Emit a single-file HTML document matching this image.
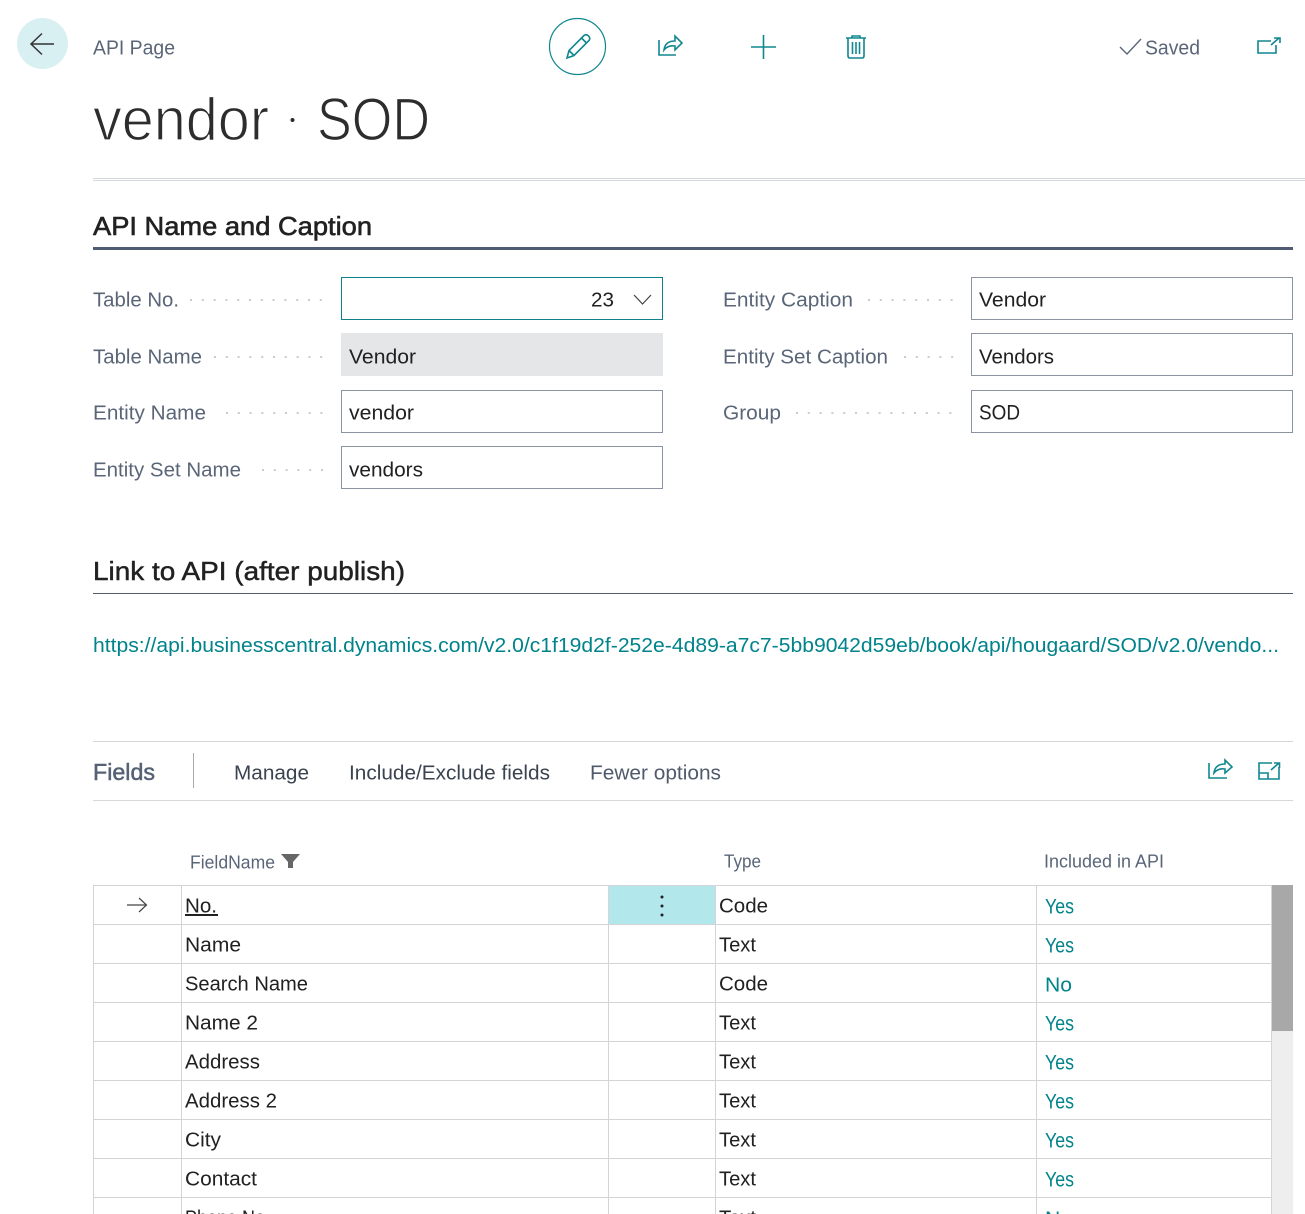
<!DOCTYPE html>
<html><head><meta charset="utf-8"><title>vendor · SOD</title>
<style>
html,body{margin:0;padding:0;background:#fff;width:1305px;height:1214px;overflow:hidden}
svg{display:block}
text{font-family:"Liberation Sans",sans-serif;font-size:20px;fill:#212121}
.l{fill:#5a6678}
.t{fill:#00838a}
.g{stroke:#d2d4d8;stroke-width:1;fill:none}
.i{fill:none;stroke:#10878f;stroke-width:1.6}
.f{fill:#fff;stroke:#8b95a1;stroke-width:1}
.d{stroke:#c9ccd0;stroke-width:2;stroke-dasharray:2 9.8;fill:none}
.h{font-size:60px;fill:#2d2d2d;stroke:#fff;stroke-width:1.3px}
</style></head><body>
<svg width="1305" height="1214" viewBox="0 0 1305 1214" xmlns="http://www.w3.org/2000/svg">
<!-- back -->
<circle cx="42.5" cy="43.5" r="25.5" fill="#d9f0f3"/>
<path d="M31 44H54M42 33.5L31 44L42 54.5" fill="none" stroke="#333" stroke-width="1.5"/>
<text x="93" y="54.500" class="l" textLength="82" lengthAdjust="spacingAndGlyphs">API Page</text>
<!-- action icons -->
<circle cx="577.5" cy="46.5" r="28" fill="none" stroke="#10878f" stroke-width="1.2"/>
<path class="i" d="M567 58L569 50.5L584 35.5Q586 34 588 35.5L589 36.5Q590.5 38.5 589 40.5L574 55.5ZM569 50.5L574 55.5M581.5 38L586.500 43" />
<path class="i" d="M659 40V55H676M664 50Q665 41 675 41V36L682 43L675 50V46Q668 45 664 50Z"/>
<path class="i" stroke-width="2" d="M751 47H776M763.500 35V59"/>
<path class="i" d="M846 38H866M848 38V56Q848 58 850 58H862Q864 58 864 56V38M852 38V36H860V38M852.500 42V54M856 42V54M859.500 42V54"/>
<path d="M1120 47L1127 54L1141 39" fill="none" stroke="#5a6678" stroke-width="1.4"/>
<text x="1145" y="54.500" class="l" textLength="55" lengthAdjust="spacingAndGlyphs">Saved</text>
<path class="i" d="M1271 41H1258V53H1276V45M1271 45L1279 38M1274 38H1280V43"/>
<!-- title -->
<text x="93" y="140" class="h" textLength="176" lengthAdjust="spacingAndGlyphs">vendor</text>
<circle cx="292.500" cy="120" r="2" fill="#2d2d2d"/>
<text x="317" y="140" class="h" textLength="113" lengthAdjust="spacingAndGlyphs">SOD</text>
<rect x="93" y="178" width="1212" height="1" fill="#d5d8dd"/>
<rect x="93" y="180" width="1212" height="1" fill="#d5d8dd"/>
<!-- section 1 -->
<text x="93" y="235" style="font-size:26px;stroke:#212121;stroke-width:.6" textLength="279" lengthAdjust="spacingAndGlyphs">API Name and Caption</text>
<rect x="93" y="247" width="1200" height="3" fill="#505c72"/>
<!-- left labels -->
<text x="93" y="306.500" class="l" textLength="86" lengthAdjust="spacingAndGlyphs">Table No.</text>
<line class="d" x1="190" y1="300" x2="327" y2="300"/>
<text x="93" y="363.500" class="l" textLength="109" lengthAdjust="spacingAndGlyphs">Table Name</text>
<line class="d" x1="214" y1="357" x2="327" y2="357"/>
<text x="93" y="419.500" class="l" textLength="113" lengthAdjust="spacingAndGlyphs">Entity Name</text>
<line class="d" x1="226" y1="413" x2="327" y2="413"/>
<text x="93" y="476.500" class="l" textLength="148" lengthAdjust="spacingAndGlyphs">Entity Set Name</text>
<line class="d" x1="262" y1="470" x2="327" y2="470"/>
<!-- left fields -->
<rect x="341.500" y="277.500" width="321" height="42" fill="#fff" stroke="#10808a"/>
<text x="591" y="306.500" textLength="23" lengthAdjust="spacingAndGlyphs">23</text>
<path d="M634 295L642.500 304L651 295" fill="none" stroke="#444" stroke-width="1.2"/>
<rect x="341" y="333" width="322" height="43" fill="#e5e6e8"/>
<text x="349" y="363.500" textLength="67" lengthAdjust="spacingAndGlyphs">Vendor</text>
<rect class="f" x="341.500" y="390.500" width="321" height="42"/>
<text x="349" y="419.500" textLength="65" lengthAdjust="spacingAndGlyphs">vendor</text>
<rect class="f" x="341.500" y="446.500" width="321" height="42"/>
<text x="349" y="476.500" textLength="74" lengthAdjust="spacingAndGlyphs">vendors</text>
<!-- right labels -->
<text x="723" y="306.500" class="l" textLength="130" lengthAdjust="spacingAndGlyphs">Entity Caption</text>
<line class="d" x1="868" y1="300" x2="957" y2="300"/>
<text x="723" y="363.500" class="l" textLength="165" lengthAdjust="spacingAndGlyphs">Entity Set Caption</text>
<line class="d" x1="904" y1="357" x2="957" y2="357"/>
<text x="723" y="419.500" class="l" textLength="58" lengthAdjust="spacingAndGlyphs">Group</text>
<line class="d" x1="796" y1="413" x2="957" y2="413"/>
<rect class="f" x="971.500" y="277.500" width="321" height="42"/>
<text x="979" y="306.500" textLength="67" lengthAdjust="spacingAndGlyphs">Vendor</text>
<rect class="f" x="971.500" y="333.500" width="321" height="42"/>
<text x="979" y="363.500" textLength="75" lengthAdjust="spacingAndGlyphs">Vendors</text>
<rect class="f" x="971.500" y="390.500" width="321" height="42"/>
<text x="979" y="419.500" style="font-size:21px" textLength="41" lengthAdjust="spacingAndGlyphs">SOD</text>
<!-- section 2 -->
<text x="93" y="580" style="font-size:26px;stroke:#212121;stroke-width:.45" textLength="312" lengthAdjust="spacingAndGlyphs">Link to API (after publish)</text>
<rect x="93" y="593" width="1200" height="1" fill="#505c72"/>
<text x="93" y="652" class="t" textLength="1186" lengthAdjust="spacingAndGlyphs">https://api.businesscentral.dynamics.com/v2.0/c1f19d2f-252e-4d89-a7c7-5bb9042d59eb/book/api/hougaard/SOD/v2.0/vendo...</text>
<!-- Fields bar -->
<rect x="93" y="741" width="1200" height="1" fill="#d5d7da"/>
<rect x="93" y="800" width="1200" height="1" fill="#d5d7da"/>
<text x="93" y="780" style="font-size:23px;fill:#556274;stroke:#556274;stroke-width:.5" textLength="62" lengthAdjust="spacingAndGlyphs">Fields</text>
<rect x="193" y="753" width="1" height="35" fill="#a6abb3"/>
<text x="234" y="779.500" style="fill:#3a4450" textLength="75" lengthAdjust="spacingAndGlyphs">Manage</text>
<text x="349" y="779.500" style="fill:#3a4450" textLength="201" lengthAdjust="spacingAndGlyphs">Include/Exclude fields</text>
<text x="590" y="779.500" style="fill:#4f5b6b" textLength="131" lengthAdjust="spacingAndGlyphs">Fewer options</text>
<path class="i" d="M1209 763V778H1227M1214 773Q1215 764 1225 764V760L1232 767L1225 773V769Q1218 768 1214 773Z"/>
<path class="i" d="M1272 763H1259V779H1279V767M1259 773H1268V779M1271 770L1279 763M1274 763H1279.500V768"/>
<!-- table header -->
<text x="190" y="868.500" class="l" style="font-size:18px" textLength="85" lengthAdjust="spacingAndGlyphs">FieldName</text>
<path d="M281 854H300L293 862V868L288 868V862Z" fill="#666"/>
<text x="724" y="867.500" class="l" style="font-size:18px" textLength="37" lengthAdjust="spacingAndGlyphs">Type</text>
<text x="1044" y="867.500" class="l" style="font-size:18px" textLength="120" lengthAdjust="spacingAndGlyphs">Included in API</text>
<!-- scrollbar -->
<rect x="1272" y="885" width="21" height="329" fill="#eeeeee"/>
<rect x="1272" y="885" width="21" height="146" fill="#a8a8a8"/>
<!-- selected cell -->
<rect x="609" y="886" width="106" height="38" fill="#b2e8ec"/>
<circle cx="662" cy="897" r="1.500" fill="#222"/><circle cx="662" cy="906" r="1.500" fill="#222"/><circle cx="662" cy="915" r="1.500" fill="#222"/>
<!-- table grid -->
<path class="g" d="M93 885.500H1272M93 924.500H1272M93 963.500H1272M93 1002.500H1272M93 1041.500H1272M93 1080.500H1272M93 1119.500H1272M93 1158.500H1272M93 1197.500H1272M93.500 885V1214M181.500 885V1214M608.500 885V1214M715.500 885V1214M1036.500 885V1214M1271.500 885V1214"/>
<path d="M127 905H146M139 898L146.500 905L139 912" fill="none" stroke="#444" stroke-width="1.2"/>
<!-- rows -->
<text x="185" y="912.500" textLength="32" lengthAdjust="spacingAndGlyphs">No.</text>
<rect x="185" y="914" width="33" height="2" fill="#212121"/>
<text x="719" y="912.500" textLength="49" lengthAdjust="spacingAndGlyphs">Code</text>
<text x="1045" y="913.500" class="t" style="font-size:21px" textLength="29" lengthAdjust="spacingAndGlyphs">Yes</text>
<text x="185" y="951.500" textLength="56" lengthAdjust="spacingAndGlyphs">Name</text>
<text x="719" y="951.500" textLength="37" lengthAdjust="spacingAndGlyphs">Text</text>
<text x="1045" y="952.500" class="t" style="font-size:21px" textLength="29" lengthAdjust="spacingAndGlyphs">Yes</text>
<text x="185" y="990.500" textLength="123" lengthAdjust="spacingAndGlyphs">Search Name</text>
<text x="719" y="990.500" textLength="49" lengthAdjust="spacingAndGlyphs">Code</text>
<text x="1045" y="991.500" class="t" textLength="27" lengthAdjust="spacingAndGlyphs">No</text>
<text x="185" y="1029.500" textLength="73" lengthAdjust="spacingAndGlyphs">Name 2</text>
<text x="719" y="1029.500" textLength="37" lengthAdjust="spacingAndGlyphs">Text</text>
<text x="1045" y="1030.500" class="t" style="font-size:21px" textLength="29" lengthAdjust="spacingAndGlyphs">Yes</text>
<text x="185" y="1068.500" textLength="75" lengthAdjust="spacingAndGlyphs">Address</text>
<text x="719" y="1068.500" textLength="37" lengthAdjust="spacingAndGlyphs">Text</text>
<text x="1045" y="1069.500" class="t" style="font-size:21px" textLength="29" lengthAdjust="spacingAndGlyphs">Yes</text>
<text x="185" y="1107.500" textLength="92" lengthAdjust="spacingAndGlyphs">Address 2</text>
<text x="719" y="1107.500" textLength="37" lengthAdjust="spacingAndGlyphs">Text</text>
<text x="1045" y="1108.500" class="t" style="font-size:21px" textLength="29" lengthAdjust="spacingAndGlyphs">Yes</text>
<text x="185" y="1146.500" textLength="36" lengthAdjust="spacingAndGlyphs">City</text>
<text x="719" y="1146.500" textLength="37" lengthAdjust="spacingAndGlyphs">Text</text>
<text x="1045" y="1147.500" class="t" style="font-size:21px" textLength="29" lengthAdjust="spacingAndGlyphs">Yes</text>
<text x="185" y="1185.500" textLength="72" lengthAdjust="spacingAndGlyphs">Contact</text>
<text x="719" y="1185.500" textLength="37" lengthAdjust="spacingAndGlyphs">Text</text>
<text x="1045" y="1186.500" class="t" style="font-size:21px" textLength="29" lengthAdjust="spacingAndGlyphs">Yes</text>
<text x="185" y="1224.500" textLength="85" lengthAdjust="spacingAndGlyphs">Phone No.</text>
<text x="719" y="1224.500" textLength="37" lengthAdjust="spacingAndGlyphs">Text</text>
<text x="1045" y="1225.500" class="t" textLength="27" lengthAdjust="spacingAndGlyphs">No</text>
</svg>
</body></html>
